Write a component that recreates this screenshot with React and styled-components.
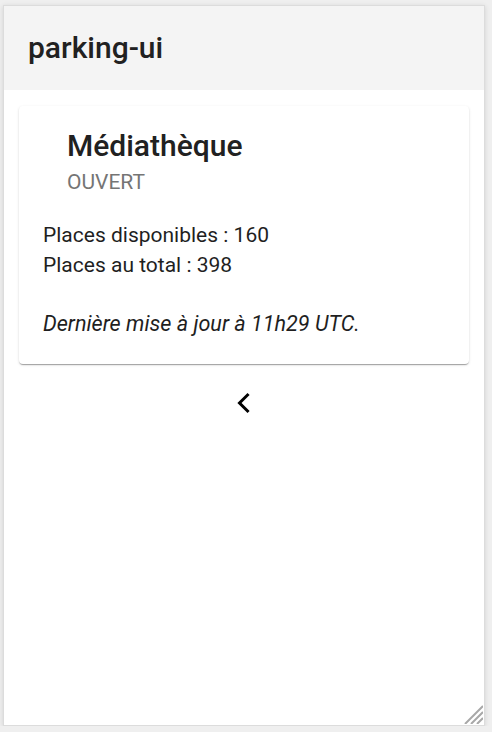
import React from "react";
import styled, { createGlobalStyle } from "styled-components";

const Global = createGlobalStyle`
  html, body { margin: 0; padding: 0; background: #efefef; }
  body { font-family: Roboto, "Noto Sans", Arial, sans-serif; color: #1f1f1f; }
`;

const Frame = styled.div`
  position: relative;
  box-sizing: border-box;
  margin: 5px 0 0 3px;
  width: 482px;
  height: 721px;
  background: #fff;
  border: 1px solid #dcdcdc;
  box-shadow: 0 1px 5px rgba(0,0,0,0.12);
  display: flex;
  flex-direction: column;
`;

const Header = styled.header`
  height: 84px;
  background: #f4f4f4;
  display: flex;
  align-items: center;
  padding: 0 24px;
  flex-shrink: 0;
`;

const Title = styled.h1`
  margin: 0;
  font-size: 30px;
  line-height: 36px;
  font-weight: 500;
  color: #212121;
`;

const Content = styled.main`
  padding: 16px 15px;
  display: flex;
  flex-direction: column;
  align-items: stretch;
`;

const Card = styled.section`
  background: #fff;
  border-radius: 4px;
  box-shadow: 0 2px 1px -1px rgba(0,0,0,0.2), 0 1px 1px 0 rgba(0,0,0,0.14), 0 1px 3px 0 rgba(0,0,0,0.12);
  padding: 22px 24px 25px 24px;
`;

const CardHead = styled.div`
  padding-left: 24px;
  margin-bottom: 26px;
`;

const CardTitle = styled.h2`
  margin: 0;
  font-size: 30px;
  font-weight: 500;
  line-height: 36px;
  color: #212121;
`;

const Status = styled.div`
  margin-top: 6px;
  font-size: 21px;
  line-height: 24px;
  color: #757575;
  text-transform: uppercase;
`;

const Line = styled.p`
  margin: 0;
  font-size: ${(p) => (p.$italic ? "21.6px" : "21px")};
  line-height: 30px;
  color: #1f1f1f;
  font-style: ${(p) => (p.$italic ? "italic" : "normal")};
  margin-top: ${(p) => (p.$gap ? "29px" : "0")};
`;

const Nav = styled.div`
  display: flex;
  justify-content: center;
  padding-top: 27px;
`;

const NavButton = styled.button`
  border: none;
  background: none;
  padding: 0;
  width: 24px;
  height: 24px;
  display: flex;
  align-items: center;
  justify-content: center;
  cursor: pointer;
`;

const Grip = styled.svg`
  position: absolute;
  right: 1px;
  bottom: 1px;
`;

export default function App() {
  return (
    <>
      <Global />
      <Frame>
        <Header>
          <Title>parking-ui</Title>
        </Header>
        <Content>
          <Card>
            <CardHead>
              <CardTitle>Médiathèque</CardTitle>
              <Status>Ouvert</Status>
            </CardHead>
            <Line>Places disponibles : 160</Line>
            <Line>Places au total : 398</Line>
            <Line $italic $gap>Dernière mise à jour à 11h29 UTC.</Line>
          </Card>
          <Nav>
            <NavButton aria-label="Précédent">
              <svg width="24" height="24" viewBox="0 0 24 24">
                <polyline points="15.5,4 7.5,12 15.5,20" fill="none" stroke="#000" strokeWidth="3" strokeLinecap="square" strokeLinejoin="miter" />
              </svg>
            </NavButton>
          </Nav>
        </Content>
        <Grip width="20" height="20" viewBox="0 0 20 20">
          <path d="M20 2 L2 20 M20 8 L8 20 M20 14 L14 20" stroke="#a8a8a8" strokeWidth="2" />
        </Grip>
      </Frame>
    </>
  );
}
